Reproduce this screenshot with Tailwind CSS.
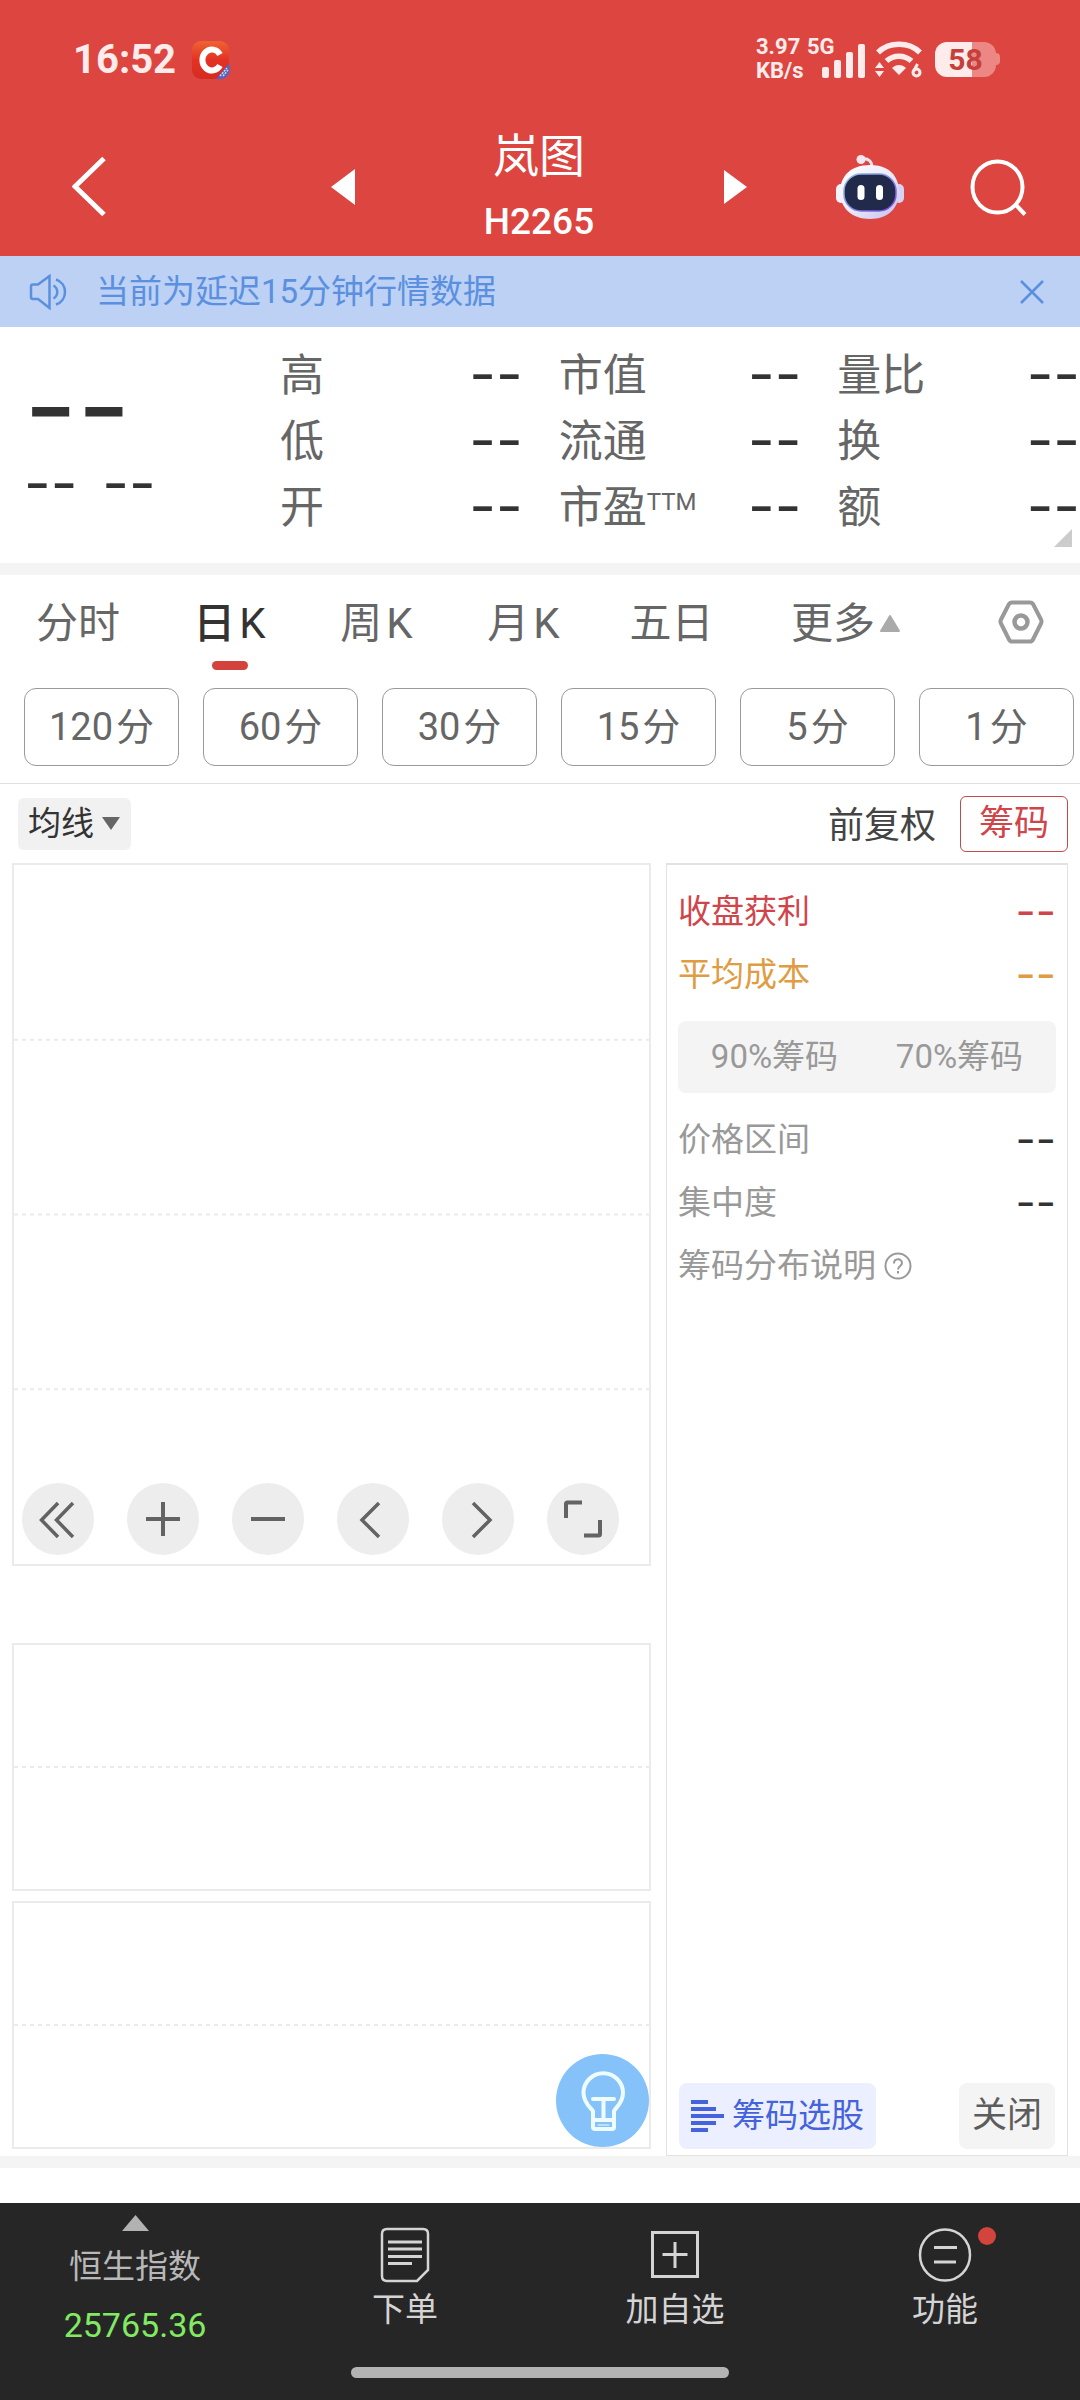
<!DOCTYPE html>
<html lang="zh-CN">
<head>
<meta charset="utf-8">
<meta name="viewport" content="width=device-width, initial-scale=1">
<title>岚图 H2265</title>
<script src="https://cdn.jsdelivr.net/npm/@tailwindcss/browser@4"></script>
</head>
<body class="flex min-h-screen flex-col bg-white font-['Roboto','Noto_Sans_CJK_SC',sans-serif] text-[#666]">

<header class="bg-[#dd4540] text-white">
  <!-- status bar -->
  <div class="flex h-[118px] items-center justify-between pl-[73px] pr-[80px] text-[#fdeceb]">
    <div class="flex items-center gap-4 pt-[2px]">
      <span class="text-[40px] leading-[48px] font-bold">16:52</span>
      <svg class="h-[38px] w-[38px]" viewBox="0 0 38 38" aria-hidden="true">
        <defs><linearGradient id="app" x1="0" y1="0" x2="0" y2="1"><stop offset="0" stop-color="#ee6433"/><stop offset=".5" stop-color="#e33224"/><stop offset="1" stop-color="#d62b20"/></linearGradient></defs>
        <rect width="37" height="38" rx="9" fill="url(#app)"/>
        <path d="M28 13.500a9.500 10.500 0 1 0 0 11" fill="none" stroke="#fff" stroke-width="6"/>
        <path d="M37.500 22v7a9 9 0 0 1-9 9H24Z" fill="#4a66c8"/>
        <path d="M28 35l7-8M31 35l5-6" stroke="#c9d4f5" stroke-width="1.500" stroke-dasharray="2 1"/>
      </svg>
    </div>
    <div class="flex items-center">
      <div class="flex w-[51px] flex-col text-[22px] leading-[24px] font-bold"><span>3.97</span><span>KB/s</span></div>
      <div class="relative h-[48px] w-[60px]">
        <span class="absolute left-0 top-0 text-[22px] leading-[24px] font-bold">5G</span>
        <svg class="absolute left-[15px] top-[8px] h-[36px] w-[44px]" viewBox="0 0 44 36" fill="currentColor" aria-hidden="true"><rect y="24" width="7" height="11" rx="2"/><rect x="12" y="17" width="7" height="18" rx="2"/><rect x="24" y="9" width="7" height="26" rx="2"/><rect x="36" y="1" width="7" height="34" rx="2"/></svg>
      </div>
      <svg class="mr-3 ml-2 h-[38px] w-[48px]" viewBox="0 0 48 38" aria-hidden="true">
        <g fill="none" stroke="currentColor" stroke-width="5.500"><path d="M3 12.500c11-11 31-11 42 0"/><path d="M11.500 21c7-6.500 18-6.500 25 0"/></g>
        <path d="M24 35l-7-7c4-4 10-4 14 0Z" fill="currentColor"/>
        <path d="M0 28l4.500-6 4.500 6ZM0 31l4.500 6 4.500-6Z" fill="currentColor"/>
        <path d="M42.500 24l-4 7.500" stroke="currentColor" stroke-width="3" fill="none"/><circle cx="41.500" cy="32.500" r="3.500" fill="none" stroke="currentColor" stroke-width="3"/>
      </svg>
      <div class="flex items-center">
        <div class="flex h-[35px] w-[61px] items-center justify-center overflow-hidden rounded-xl bg-linear-to-r from-[#fdeceb] from-60% to-[#ec8784] to-60% text-[30px] leading-[35px] font-bold text-[#c63f3b]">58</div>
        <span class="h-3 w-1 rounded-r bg-[#ec8784]"></span>
      </div>
    </div>
  </div>
  <!-- title bar -->
  <div class="grid h-[138px] grid-cols-[302fr_476fr_302fr] items-center">
    <div class="flex items-center pl-[72px]">
      <button aria-label="返回"><svg class="h-[62px] w-[36px]" viewBox="0 0 36 62" fill="none" stroke="#fff" stroke-width="5"><path d="M32 2.500 3 30.500l29 28"/></svg></button>
    </div>
    <div class="flex items-center justify-between pl-[28px] pr-[30px]">
      <button aria-label="上一只"><svg class="h-[36px] w-[25px]" viewBox="0 0 25 36" fill="#fff"><path d="M25 0v36L1 18Z"/></svg></button>
      <h1 class="flex flex-col items-center pt-1"><span class="text-[46px] leading-[66px]">岚图</span><span class="text-[37px] leading-[66px] font-medium">H2265</span></h1>
      <button aria-label="下一只"><svg class="h-[36px] w-[25px]" viewBox="0 0 25 36" fill="#fff"><path d="M1 1v34l23-17Z"/></svg></button>
    </div>
    <div class="flex items-center justify-between pl-[57px] pr-[52px]">
      <button aria-label="智能助手"><svg class="h-[66px] w-[70px]" viewBox="0 0 70 66">
        <defs><linearGradient id="shell" x1="0" y1="0" x2="1" y2="1"><stop offset="0" stop-color="#fff"/><stop offset=".5" stop-color="#ecebf9"/><stop offset="1" stop-color="#c2bdf0"/></linearGradient><linearGradient id="rim" x1="0" y1="0" x2="1" y2="1"><stop offset="0" stop-color="#8fc5dd"/><stop offset="1" stop-color="#7a45e0"/></linearGradient></defs>
        <path d="M27 5c7-1 10 3 10 8" fill="none" stroke="#f1e3f0" stroke-width="3"/><circle cx="26" cy="5.500" r="4.500" fill="#f6e6f2"/>
        <rect x="1" y="30" width="10" height="19" rx="5" fill="#f3f2fc"/><rect x="59" y="30" width="10" height="19" rx="5" fill="#d5d2f5"/>
        <path d="M35 11c19 0 29 11 29 27S53 65 35 65 5 54 5 38 16 11 35 11Z" fill="url(#shell)"/>
        <rect x="9" y="20" width="52" height="37" rx="17" fill="#222a4c" stroke="url(#rim)" stroke-width="1.500"/>
        <rect x="22.500" y="31" width="7" height="15" rx="3.500" fill="#fff"/><rect x="41" y="31" width="7" height="15" rx="3.500" fill="#fff"/>
      </svg></button>
      <button aria-label="搜索"><svg class="h-[60px] w-[58px]" viewBox="0 0 58 60" fill="none" stroke="#fff" stroke-width="4"><ellipse cx="27.500" cy="30" rx="25" ry="25.500"/><path d="M45 47l10 10.500"/></svg></button>
    </div>
  </div>
</header>

<!-- delay notice -->
<div class="flex h-[71px] items-center bg-[#bcd1f4] pl-[29px] pr-[36px] text-[#5a90df]">
  <svg class="mr-[29px] h-[36px] w-[38px]" viewBox="0 0 38 36" fill="none" stroke="currentColor" stroke-width="2.500" aria-hidden="true"><path d="M2 12.500q0-2 2-2h5L20.500 2v32L9 25H4q-2 0-2-2Z"/><path d="M24.500 11.500c5 3 5 10 0 13M27 5.500c12 4 12 21 0 25"/></svg>
  <p class="flex-1 text-[33px] leading-[48px]">当前为延迟15分钟行情数据</p>
  <button aria-label="关闭提示"><svg class="h-[24px] w-[24px]" viewBox="0 0 24 24" fill="none" stroke="currentColor" stroke-width="2.500"><path d="M1 1l22 22M23 1 1 23"/></svg></button>
</div>

<!-- quote -->
<section class="relative flex border-b-[12px] border-[#f4f4f4] pb-[22px]">
  <div class="w-[280px] pl-6 pt-[35px] font-['Inter',sans-serif] text-[#333]">
    <p class="text-[116px] leading-[88px]">--</p>
    <p class="flex gap-[25px] text-[58px] leading-[66px]"><span>--</span><span>--</span></p>
  </div>
  <dl class="grid flex-1 grid-cols-3 gap-x-9 pt-[16px] text-[44px] leading-[66px]">
    <div class="flex justify-between"><dt>高</dt><dd class="font-['Inter',sans-serif] text-[58px] leading-[62px] text-[#333]">--</dd></div>
    <div class="flex justify-between"><dt>市值</dt><dd class="font-['Inter',sans-serif] text-[58px] leading-[62px] text-[#333]">--</dd></div>
    <div class="flex justify-between"><dt>量比</dt><dd class="font-['Inter',sans-serif] text-[58px] leading-[62px] text-[#333]">--</dd></div>
    <div class="flex justify-between"><dt>低</dt><dd class="font-['Inter',sans-serif] text-[58px] leading-[62px] text-[#333]">--</dd></div>
    <div class="flex justify-between"><dt>流通</dt><dd class="font-['Inter',sans-serif] text-[58px] leading-[62px] text-[#333]">--</dd></div>
    <div class="flex justify-between"><dt>换</dt><dd class="font-['Inter',sans-serif] text-[58px] leading-[62px] text-[#333]">--</dd></div>
    <div class="flex justify-between"><dt>开</dt><dd class="font-['Inter',sans-serif] text-[58px] leading-[62px] text-[#333]">--</dd></div>
    <div class="flex justify-between"><dt class="flex">市盈<span class="text-[24px] leading-[54px]">TTM</span></dt><dd class="font-['Inter',sans-serif] text-[58px] leading-[62px] text-[#333]">--</dd></div>
    <div class="flex justify-between"><dt>额</dt><dd class="font-['Inter',sans-serif] text-[58px] leading-[62px] text-[#333]">--</dd></div>
  </dl>
  <svg class="absolute right-2 bottom-4 h-[18px] w-[18px]" viewBox="0 0 18 18" fill="#ccc" aria-hidden="true"><path d="M18 0v18H0Z"/></svg>
</section>

<!-- period tabs -->
<nav class="grid h-[113px] grid-cols-[156fr_147fr_147fr_147fr_149fr_200fr_134fr] pt-[17px] text-[42px] leading-[64px]">
  <button class="flex justify-center">分时</button>
  <button class="flex flex-col items-center text-[#333]"><span class="flex gap-1"><span class="font-medium">日</span><span>K</span></span><span class="mt-[5px] h-[9px] w-[36px] rounded-full bg-[#d3433c]"></span></button>
  <button class="flex justify-center gap-1"><span>周</span><span>K</span></button>
  <button class="flex justify-center gap-1"><span>月</span><span>K</span></button>
  <button class="flex justify-center">五日</button>
  <button class="flex items-start justify-center gap-1">更多<svg class="mt-[22px] h-[19px] w-[22px]" viewBox="0 0 22 19" fill="#aaa"><path d="M11 2 20 17H2Z" stroke="#aaa" stroke-width="2" stroke-linejoin="round"/></svg></button>
  <button class="flex items-start justify-center pl-[16px] pt-[8px]" aria-label="设置"><svg class="h-[44px] w-[46px]" viewBox="0 0 46 44" fill="none" stroke="#999" stroke-width="4" stroke-linejoin="round"><path d="M14 2.500h18q2 0 3 1.500l8 15.500q1 2 0 4L35 39.500q-1 2-3 2H14q-2 0-3-2L3 23.500q-1-2 0-4L11 4q1-1.500 3-1.500Z"/><circle cx="23" cy="22" r="6.500" stroke-width="4.500"/></svg></button>
</nav>
<div class="grid grid-cols-6 gap-6 border-b border-[#e0e0e0] pb-[17px] pl-6 pr-[6px] text-[38px] leading-[76px]">
  <button class="rounded-xl border border-[#999]">120<span class="pl-[3px]">分</span></button>
  <button class="rounded-xl border border-[#999]">60<span class="pl-[3px]">分</span></button>
  <button class="rounded-xl border border-[#999]">30<span class="pl-[3px]">分</span></button>
  <button class="rounded-xl border border-[#999]">15<span class="pl-[3px]">分</span></button>
  <button class="rounded-xl border border-[#999]">5<span class="pl-[3px]">分</span></button>
  <button class="rounded-xl border border-[#999]">1<span class="pl-[3px]">分</span></button>
</div>

<!-- chart toolbar -->
<div class="flex h-[79px] items-center justify-between pl-[18px] pr-3 text-[#333]">
  <button class="flex h-[52px] items-center gap-2 rounded-md bg-[#f1f1f1] pl-[10px] pr-[11px] text-[33px] leading-[52px]">均线<svg class="h-[13px] w-[18px]" viewBox="0 0 18 13" fill="#666"><path d="M0 0h18L9 13Z"/></svg></button>
  <div class="flex items-center gap-6">
    <button class="pt-1 text-[36px] leading-[56px] text-[#444]">前复权</button>
    <button class="h-[56px] rounded-md border border-[#c14a4a] px-[18px] text-[35px] leading-[54px] text-[#d0454a]">筹码</button>
  </div>
</div>

<!-- charts and chip panel -->
<main class="grid grid-cols-[639fr_402fr] gap-x-[15px] border-b-[12px] border-[#f4f4f4] pl-3 pr-3">
  <div class="relative flex flex-col pb-[7px]">
    <div class="relative flex h-[703px] flex-col border-2 border-[#ebebeb]">
      <svg class="w-full flex-1" aria-hidden="true"><g stroke="#ebebeb" stroke-width="2" stroke-dasharray="4 4"><line x1="0" x2="100%" y1="25%" y2="25%"/><line x1="0" x2="100%" y1="50%" y2="50%"/><line x1="0" x2="100%" y1="75%" y2="75%"/></g></svg>
      <div class="absolute bottom-[9px] left-2 flex gap-[33px]">
        <button class="h-[72px] w-[72px] rounded-full bg-[#ededed]" aria-label="最左"><svg viewBox="0 0 72 72" fill="none" stroke="#636363" stroke-width="3.500"><path d="M36 20 19.500 37 36 54M51 20 34.500 37 51 54"/></svg></button>
        <button class="h-[72px] w-[72px] rounded-full bg-[#ededed]" aria-label="放大"><svg viewBox="0 0 72 72" fill="none" stroke="#636363" stroke-width="4"><path d="M36 19v34M19 36h34"/></svg></button>
        <button class="h-[72px] w-[72px] rounded-full bg-[#ededed]" aria-label="缩小"><svg viewBox="0 0 72 72" fill="none" stroke="#636363" stroke-width="4"><path d="M19 36h34"/></svg></button>
        <button class="h-[72px] w-[72px] rounded-full bg-[#ededed]" aria-label="左移"><svg viewBox="0 0 72 72" fill="none" stroke="#636363" stroke-width="3.500"><path d="M42 20 25 37 42 54"/></svg></button>
        <button class="h-[72px] w-[72px] rounded-full bg-[#ededed]" aria-label="右移"><svg viewBox="0 0 72 72" fill="none" stroke="#636363" stroke-width="3.500"><path d="M31 20 48 37 31 54"/></svg></button>
        <button class="h-[72px] w-[72px] rounded-full bg-[#ededed]" aria-label="全屏"><svg viewBox="0 0 72 72" fill="none" stroke="#636363" stroke-width="4"><path d="M19 35V21q0-1.500 1.500-1.500H35M53 37v14q0 1.500-1.500 1.500H37"/></svg></button>
      </div>
    </div>
    <div class="mt-[77px] flex h-[248px] flex-col border-2 border-[#ebebeb]">
      <svg class="w-full flex-1" aria-hidden="true"><line x1="0" x2="100%" y1="50%" y2="50%" stroke="#ebebeb" stroke-width="2" stroke-dasharray="4 4"/></svg>
    </div>
    <div class="mt-[10px] flex h-[248px] flex-col border-2 border-[#ebebeb]">
      <svg class="w-full flex-1" aria-hidden="true"><line x1="0" x2="100%" y1="50%" y2="50%" stroke="#ebebeb" stroke-width="2" stroke-dasharray="4 4"/></svg>
    </div>
    <button class="absolute right-[2px] bottom-[9px] h-[93px] w-[93px] rounded-full bg-[#85c2f9]" aria-label="提示"><svg viewBox="0 0 93 93" fill="none" stroke="#effcff" stroke-width="4" stroke-linejoin="round" stroke-linecap="round"><path d="M37 57c-2-3-9.500-8-9.500-18a19.500 19.500 0 0 1 39.500 0c0 10-7 14-9 18v16q0 2-2 2H39q-2 0-2-2ZM37 66h21M37 45h21M47.500 46v20"/><path d="M42 71h11" stroke-width="1"/></svg></button>
  </div>

  <aside class="flex flex-col border border-t-2 border-[#e2e2e2] pt-[15px] text-[33px] leading-[63px] text-[#999]">
    <dl class="px-[11px]">
      <div class="flex justify-between text-[#d0454a]"><dt>收盘获利</dt><dd class="font-['Inter',sans-serif] text-[44px]">--</dd></div>
      <div class="flex justify-between text-[#e09c42]"><dt>平均成本</dt><dd class="font-['Inter',sans-serif] text-[44px]">--</dd></div>
    </dl>
    <div class="mx-[11px] my-[15px] grid h-[72px] grid-cols-2 rounded-lg bg-[#f4f4f4] px-1 leading-[72px]"><button>90%筹码</button><button>70%筹码</button></div>
    <dl class="px-[11px]">
      <div class="flex justify-between"><dt>价格区间</dt><dd class="font-['Inter',sans-serif] text-[44px] text-[#333]">--</dd></div>
      <div class="flex justify-between"><dt>集中度</dt><dd class="font-['Inter',sans-serif] text-[44px] text-[#333]">--</dd></div>
    </dl>
    <button class="flex items-center gap-2 self-start pl-[11px]">筹码分布说明<svg class="h-[28px] w-[28px]" viewBox="0 0 28 28" fill="none" stroke="currentColor" stroke-width="2"><circle cx="14" cy="14" r="12.500"/><path d="M10 11.500c0-5.500 8-5.500 8-.500 0 3-4 3-4 6.500M14 19v2.500"/></svg></button>
    <div class="mt-auto flex justify-between px-3 pb-[6px]">
      <button class="flex h-[66px] items-center gap-2 rounded-lg bg-[#ebefff] px-3 leading-[64px] text-[#4463dc]"><svg class="h-[32px] w-[33px]" viewBox="0 0 33 32" fill="#4463dc"><path d="M0 0h17v4H0ZM0 7h25v4H0ZM0 14h33v4H0ZM0 21h25v4H0ZM0 28h17v4H0Z"/></svg>筹码选股</button>
      <button class="h-[66px] rounded-lg bg-[#f4f4f4] px-[13px] text-[35px] leading-[66px] text-[#5c5c5c]">关闭</button>
    </div>
  </aside>
</main>

<!-- bottom bar -->
<footer class="mt-auto bg-[#262626] text-[#d4d4d4]">
  <div class="grid h-[164px] grid-cols-4 text-[33px]">
    <button class="flex flex-col items-center pt-3 text-[#b8b8b8]"><svg class="h-[16px] w-[27px]" viewBox="0 0 27 16" fill="#b2b2b2"><path d="M13.500 0 27 16H0Z"/></svg><span class="mt-2 leading-[56px]">恒生指数</span><span class="text-[34px] leading-[60px] text-[#82ea62]">25765.36</span></button>
    <button class="flex flex-col items-center pt-6"><svg class="h-[56px] w-[50px]" viewBox="0 0 50 56" fill="none" stroke="currentColor" stroke-width="2.500"><path d="M7 2h36q5 0 5 5v36L37 54H7q-5 0-5-5V7q0-5 5-5Z"/><path d="M8 15h34M8 22h34M8 29.500h34M8 36.500h24" stroke-width="3"/></svg><span class="leading-[54px]">下单</span></button>
    <button class="flex flex-col items-center pt-6"><svg class="h-[56px] w-[50px]" viewBox="0 0 50 56" fill="none" stroke="currentColor" stroke-width="3"><path d="M2.500 5.500h45v44h-45ZM25 15v26M12.500 27.500h25"/></svg><span class="leading-[54px]">加自选</span></button>
    <button class="flex flex-col items-center pt-6"><span class="relative"><svg class="h-[56px] w-[54px]" viewBox="0 0 54 56" fill="none" stroke="currentColor" stroke-width="2.500"><ellipse cx="27" cy="28" rx="25" ry="25.500"/><path d="M16 20.500h23M16 35h22" stroke-width="3"/></svg><span class="absolute -right-6 top-0 h-[18px] w-[18px] rounded-full bg-[#d3443c]"></span></span><span class="leading-[54px]">功能</span></button>
  </div>
  <div class="mx-auto mb-[22px] h-[11px] w-[35%] rounded-full bg-[#b3b3b3]"></div>
</footer>
</body>
</html>
